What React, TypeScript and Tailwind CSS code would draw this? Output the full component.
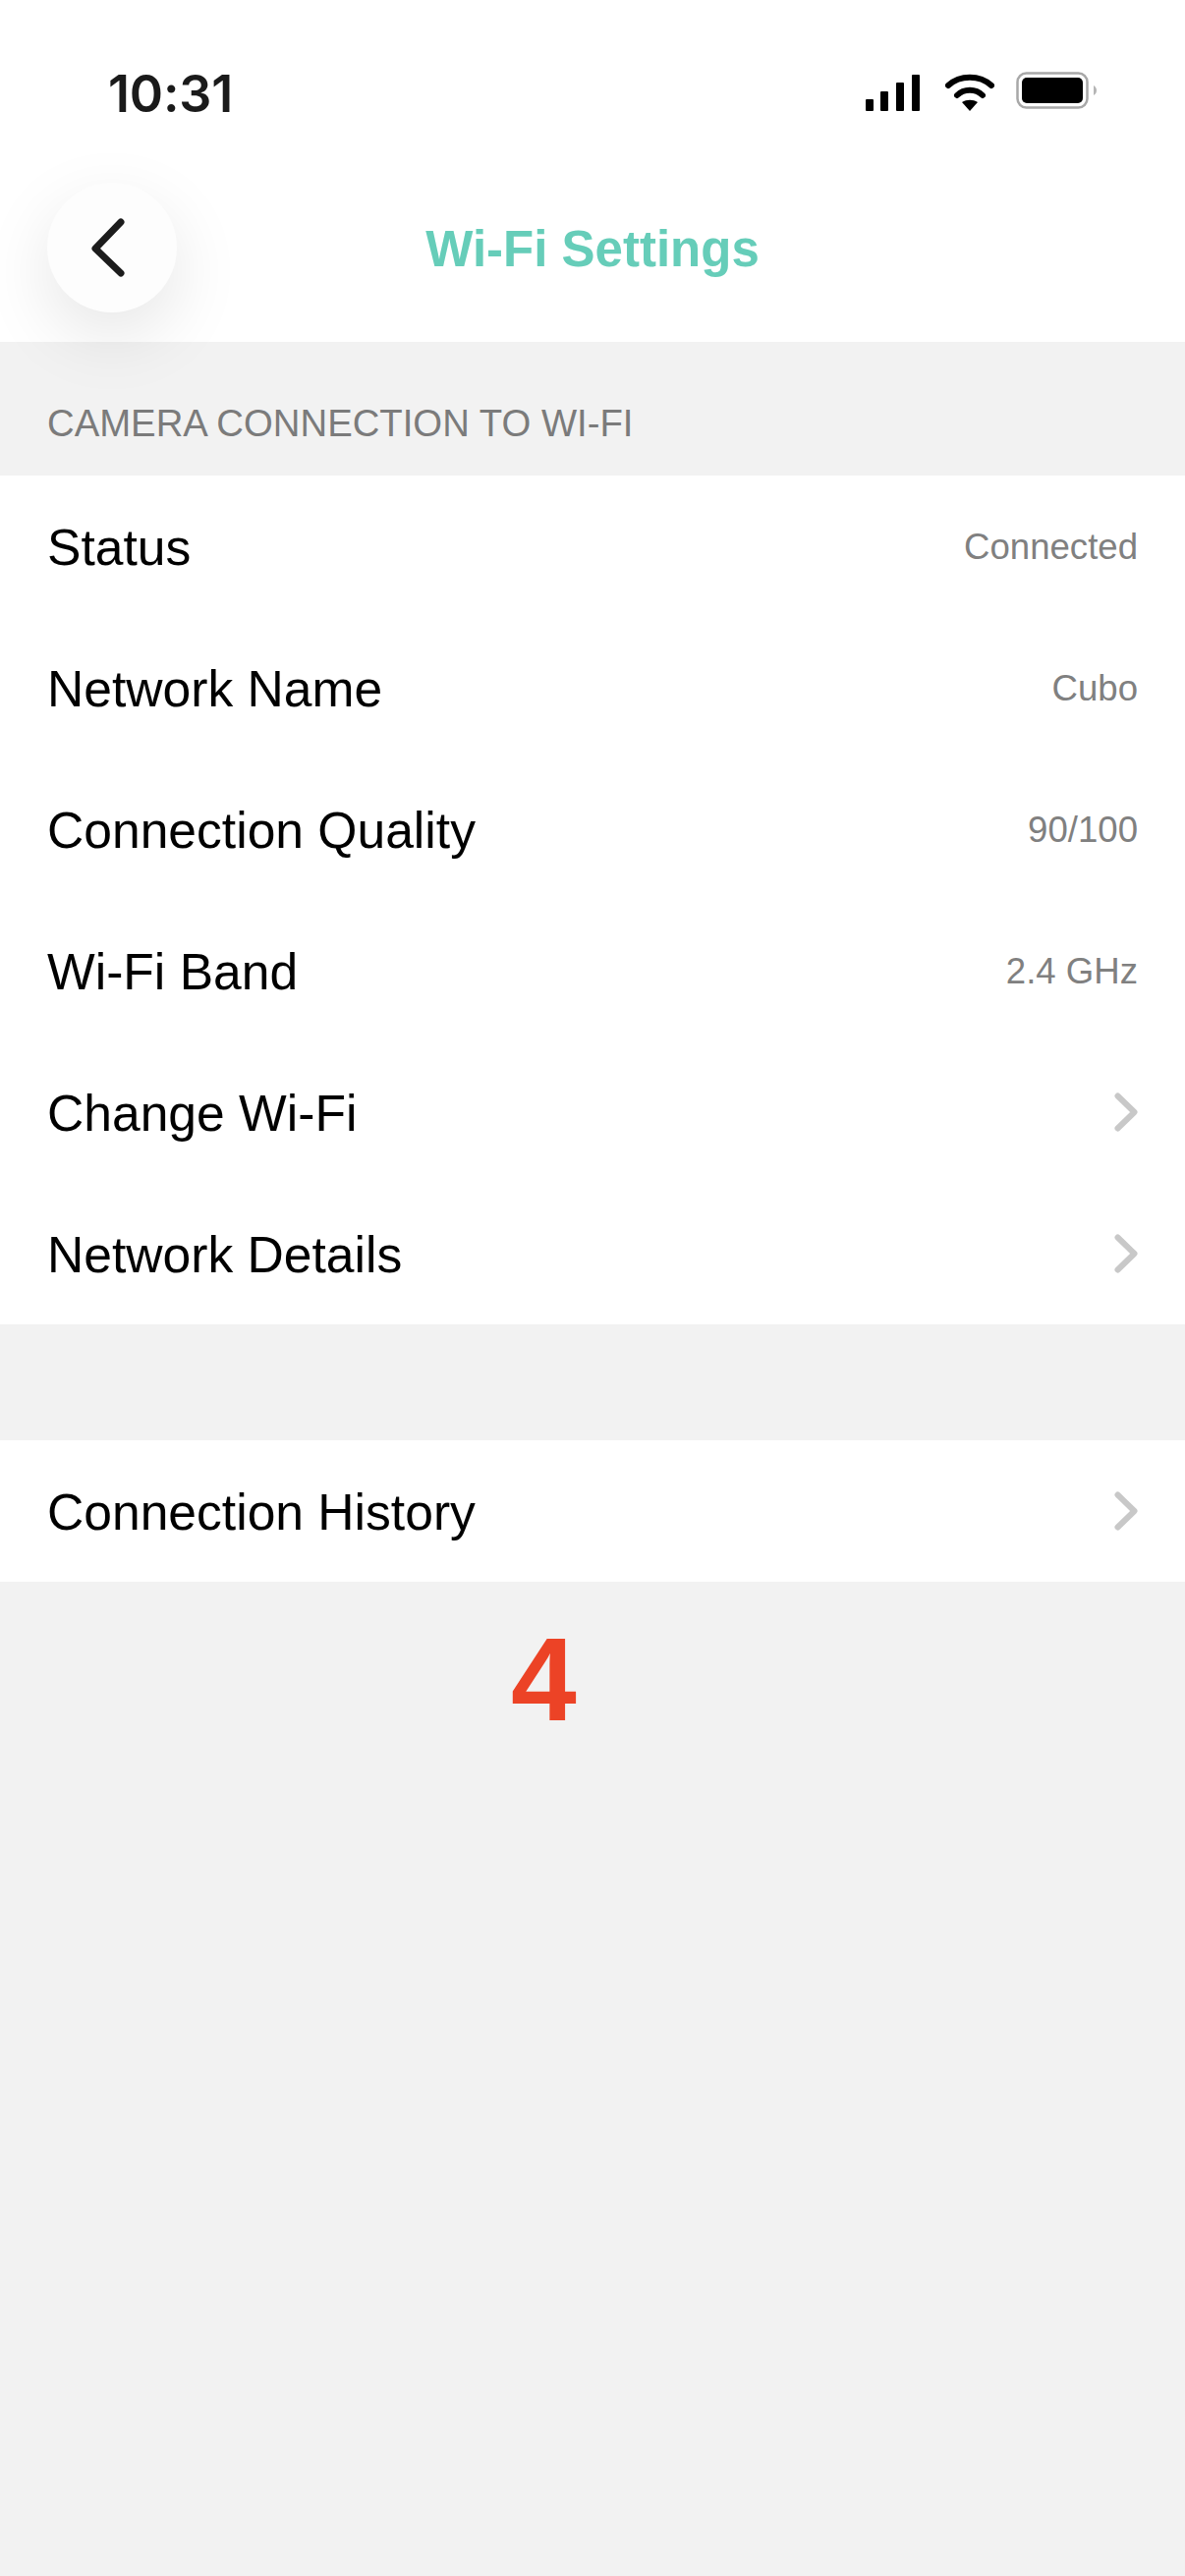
const statusRows = [
  { label: 'Status', value: 'Connected' },
  { label: 'Network Name', value: 'Cubo' },
  { label: 'Connection Quality', value: '90/100' },
  { label: 'Wi-Fi Band', value: '2.4 GHz' },
  { label: 'Change Wi-Fi' },
  { label: 'Network Details' },
]

function Row({ label, value }: { label: string; value?: string }) {
  return (
    <div className="flex h-[144px] items-center justify-between bg-white px-[48px]">
      <span className="pt-[4px] text-[51.6px] leading-none text-black">{label}</span>
      {value ? (
        <span className="pt-[2px] text-[36.6px] leading-none text-[#808080]">{value}</span>
      ) : (
        <svg width="24" height="40" viewBox="0 0 24 40" fill="none" aria-hidden="true">
          <path d="M3.500 3.500 20.500 20 3.500 36.500" stroke="#c8c8c8" strokeWidth="6" strokeLinecap="round" strokeLinejoin="round" />
        </svg>
      )}
    </div>
  )
}

export default function App() {
  return (
    <div className="relative flex min-h-[2622px] w-[1206px] flex-col bg-[#f2f2f2] font-['Liberation_Sans',Arial,sans-serif]">
      {/* 헤더 */}
      <header className="flex h-[348px] flex-col bg-white">
        <div className="flex h-[186px] items-start justify-between pl-[110px] pr-[88px] pt-[66px]">
          <span className="font-['Inter',sans-serif] text-[52px] font-semibold leading-[60px] tracking-[-0.2px] text-[#1a1a1a]">10:31</span>
          <div className="mt-[7px] flex items-start">
            <svg width="55" height="37" viewBox="0 0 55 37" className="mt-[3px]" fill="#000" aria-hidden="true">
              <rect x="0" y="25" width="8" height="12" rx="1" />
              <rect x="15" y="17" width="8" height="20" rx="1" />
              <rect x="31" y="8" width="8" height="29" rx="1" />
              <rect x="47" y="0" width="8" height="37" rx="1" />
            </svg>
            <svg width="52" height="38" viewBox="0 0 52 38" className="ml-[25px] mt-[2px]" fill="none" aria-hidden="true">
              <path d="M4 12C16 1 36 1 48 12" stroke="#000" strokeWidth="6" strokeLinecap="round" />
              <path d="M13 22C20 15 32 15 39 22" stroke="#000" strokeWidth="6" strokeLinecap="round" />
              <path d="M26 38 18 29C23 26 29 26 34 29Z" fill="#000" />
            </svg>
            <svg width="84" height="40" viewBox="0 0 84 40" className="ml-[21px]" fill="none" aria-hidden="true">
              <rect x="1.500" y="1.500" width="71" height="35" rx="9" stroke="#a8a8a8" strokeWidth="2.500" />
              <rect x="6" y="6" width="62" height="26" rx="5" fill="#000" />
              <path d="M79 14c2 1 3 3 3 5s-1 4-3 5Z" fill="#b5b5b5" />
            </svg>
          </div>
        </div>
        <div className="grid grid-cols-[132px_1fr_132px] items-center px-[48px]">
          <button
            type="button"
            aria-label="Back"
            className="relative z-10 flex size-[132px] items-center justify-center rounded-full bg-[#fdfdfd] shadow-[0_24px_70px_rgba(0,0,0,0.1)]"
          >
            <svg width="40" height="60" viewBox="0 0 40 60" fill="none" className="mr-[9px]" aria-hidden="true">
              <path d="M33 4 7 31 33 56" stroke="#1c1c1c" strokeWidth="7" strokeLinecap="round" strokeLinejoin="round" />
            </svg>
          </button>
          <h1 className="pt-[3px] text-center text-[51px] font-bold leading-none text-[#66cdb9]">Wi-Fi Settings</h1>
          <span />
        </div>
      </header>

      {/* 연결 정보 */}
      <div className="flex h-[136px] items-center pl-[48px] pt-[30px] text-[38.3px] leading-none text-[#7b7b7b]">
        CAMERA CONNECTION TO WI-FI
      </div>
      <section>
        {statusRows.map((row) => (
          <Row key={row.label} label={row.label} value={row.value} />
        ))}
      </section>

      <section className="mt-[118px]">
        <Row label="Connection History" />
      </section>

      {/* 이미지 위 주석 숫자 */}
      <span className="absolute left-[520px] top-[1643px] text-[120px] font-bold leading-[1.1] text-[#ec4326]">4</span>
    </div>
  )
}
